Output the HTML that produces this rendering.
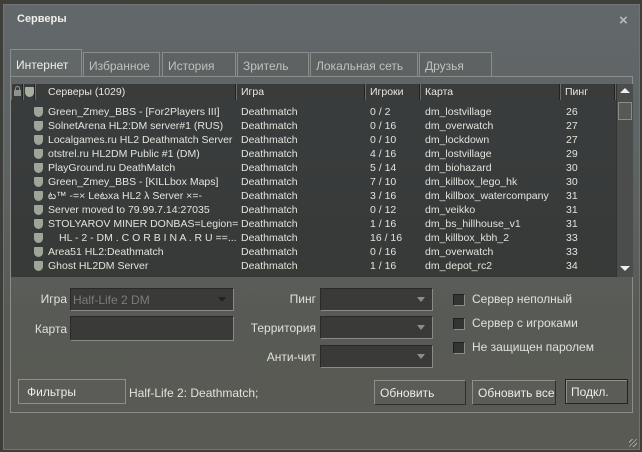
<!DOCTYPE html>
<html><head><meta charset="utf-8"><style>
*{margin:0;padding:0;box-sizing:border-box}
body{width:642px;height:452px;overflow:hidden;background:#3e3f3a;font-family:"Liberation Sans","DejaVu Sans",sans-serif;font-size:11px;color:#e2e4dc;position:relative}
.win{position:absolute;left:3px;top:4px;width:637px;height:446px;background:linear-gradient(#62686b 0%,#5e6465 30%,#585a55 70%,#5a5a54 100%);border:1px solid #707370}
.a{position:absolute;white-space:nowrap}
.tab{position:absolute;top:52px;height:25px;border:1px solid #8a8d8a;border-bottom:none;color:#bfc3bd;font-size:12px;padding:6px 0 0 5px;background:#5d6262}
.tab.on{top:49px;height:28px;color:#eef0ea;background:#626767;padding-top:8px}
.panel{position:absolute;left:10px;top:76px;width:623px;height:337px;border:1px solid #8a8d8a}
.hd{position:absolute;top:84px;height:16px;background:#3a3c3b;border-left:1px solid #6a6d6a;border-right:1px solid #222;color:#e8e8e0;padding:2px 0 0 4px;font-size:10.5px}
.list{position:absolute;left:11px;top:100px;width:605px;height:177px;background:rgba(40,42,41,.68)}
.r{position:absolute;left:0;height:14px;width:605px;font-size:10.5px}
.r span{position:absolute;top:1px;white-space:nowrap}
.r span:nth-of-type(1){width:190px;overflow:hidden}
.sh{position:absolute;left:23px;top:2px;width:9px;height:10px;background:#9ea69a;border-radius:1px 1px 5px 5px}
.sb{position:absolute;left:616px;top:84px;width:17px;height:193px;background:#4a4d4c;border-left:1px solid #333}
.combo{position:absolute;height:23px;background:#3a3b38;border:1px solid #8a8b86;border-top-color:#2a2b28;border-left-color:#2a2b28}
.combo i{position:absolute;right:7px;top:8px;width:0;height:0;border-left:4px solid transparent;border-right:4px solid transparent;border-top:5px solid #8c8e88}
.cb{position:absolute;left:453px;width:12px;height:12px;background:#333431;border:1px solid #1e1f1c;border-right-color:#8a8b86;border-bottom-color:#8a8b86}
.btn{position:absolute;height:25px;border:1px solid #8e908a;border-right-color:#2e2f2b;border-bottom-color:#2e2f2b;background:#5b5c57;font-size:12px;padding:5px 0 0 5px;color:#eceee6;overflow:hidden;white-space:nowrap}
.lbl{position:absolute;font-size:12px;color:#e0e2da;text-align:right}
</style></head><body>
<div class="win"></div>
<div class="a" style="left:17px;top:13px;font-weight:bold;font-size:11px;color:#f0f0ea">Серверы</div>
<div class="a" style="left:619px;top:12px;font-size:15px;font-weight:bold;color:#b8bcb8">×</div>

<div class="tab on" style="left:10px;width:72px">Интернет</div>
<div class="tab" style="left:83px;width:77px">Избранное</div>
<div class="tab" style="left:162px;width:74px">История</div>
<div class="tab" style="left:237px;width:72px">Зритель</div>
<div class="tab" style="left:310px;width:108px">Локальная сеть</div>
<div class="tab" style="left:419px;width:73px">Друзья</div>
<div class="panel"></div>

<div class="hd" style="left:11px;width:12px;padding:0"><div style="position:absolute;left:2px;top:6px;width:7px;height:6px;background:#8e928c"></div><div style="position:absolute;left:3px;top:2px;width:5px;height:5px;border:1px solid #8e928c;border-bottom:none;border-radius:3px 3px 0 0"></div></div>
<div class="hd" style="left:23px;width:12px;padding:0"><div class="sh" style="left:1px;top:3px;background:#a8b0a0"></div></div>
<div class="hd" style="left:35px;width:201px;padding-left:12px">Серверы (1029)</div>
<div class="hd" style="left:236px;width:129px">Игра</div>
<div class="hd" style="left:365px;width:55px">Игроки</div>
<div class="hd" style="left:420px;width:140px">Карта</div>
<div class="hd" style="left:560px;width:55px">Пинг</div>

<div class="list">
<div class="r" style="top:5px"><div class="sh"></div><span style="left:37px">Green_Zmey_BBS - [For2Players III]</span><span style="left:230px">Deathmatch</span><span style="left:359px">0 / 2</span><span style="left:414px">dm_lostvillage</span><span style="left:555px">26</span></div>
<div class="r" style="top:19px"><div class="sh"></div><span style="left:37px">SolnetArena HL2:DM server#1 (RUS)</span><span style="left:230px">Deathmatch</span><span style="left:359px">0 / 16</span><span style="left:414px">dm_overwatch</span><span style="left:555px">27</span></div>
<div class="r" style="top:33px"><div class="sh"></div><span style="left:37px">Localgames.ru HL2 Deathmatch Server</span><span style="left:230px">Deathmatch</span><span style="left:359px">0 / 10</span><span style="left:414px">dm_lockdown</span><span style="left:555px">27</span></div>
<div class="r" style="top:47px"><div class="sh"></div><span style="left:37px">otstrel.ru HL2DM Public #1 (DM)</span><span style="left:230px">Deathmatch</span><span style="left:359px">4 / 16</span><span style="left:414px">dm_lostvillage</span><span style="left:555px">29</span></div>
<div class="r" style="top:61px"><div class="sh"></div><span style="left:37px">PlayGround.ru DeathMatch</span><span style="left:230px">Deathmatch</span><span style="left:359px">5 / 14</span><span style="left:414px">dm_biohazard</span><span style="left:555px">30</span></div>
<div class="r" style="top:75px"><div class="sh"></div><span style="left:37px">Green_Zmey_BBS - [KILLbox Maps]</span><span style="left:230px">Deathmatch</span><span style="left:359px">7 / 10</span><span style="left:414px">dm_killbox_lego_hk</span><span style="left:555px">30</span></div>
<div class="r" style="top:89px"><div class="sh"></div><span style="left:37px">ట™ -=× Leటxa HL2 λ Server ×=-</span><span style="left:230px">Deathmatch</span><span style="left:359px">3 / 16</span><span style="left:414px">dm_killbox_watercompany</span><span style="left:555px">31</span></div>
<div class="r" style="top:103px"><div class="sh"></div><span style="left:37px">Server moved to 79.99.7.14:27035</span><span style="left:230px">Deathmatch</span><span style="left:359px">0 / 12</span><span style="left:414px">dm_veikko</span><span style="left:555px">31</span></div>
<div class="r" style="top:117px"><div class="sh"></div><span style="left:37px">STOLYAROV MINER DONBAS=Legion=...</span><span style="left:230px">Deathmatch</span><span style="left:359px">1 / 16</span><span style="left:414px">dm_bs_hillhouse_v1</span><span style="left:555px">31</span></div>
<div class="r" style="top:131px"><div class="sh"></div><span style="left:48px;width:180px">HL - 2 - DM . C O R B I N A . R U ==...</span><span style="left:230px">Deathmatch</span><span style="left:359px">16 / 16</span><span style="left:414px">dm_killbox_kbh_2</span><span style="left:555px">33</span></div>
<div class="r" style="top:145px"><div class="sh"></div><span style="left:37px">Area51 HL2:Deathmatch</span><span style="left:230px">Deathmatch</span><span style="left:359px">0 / 16</span><span style="left:414px">dm_overwatch</span><span style="left:555px">33</span></div>
<div class="r" style="top:159px"><div class="sh"></div><span style="left:37px">Ghost HL2DM Server</span><span style="left:230px">Deathmatch</span><span style="left:359px">1 / 16</span><span style="left:414px">dm_depot_rc2</span><span style="left:555px">34</span></div>
</div>
<div class="sb">
<div style="position:absolute;left:3px;top:4px;width:0;height:0;border-left:5px solid transparent;border-right:5px solid transparent;border-bottom:5px solid #eee"></div>
<div style="position:absolute;left:1px;top:18px;width:14px;height:18px;border:1px solid #8a8c88;background:#565956"></div>
<div style="position:absolute;left:3px;top:182px;width:0;height:0;border-left:5px solid transparent;border-right:5px solid transparent;border-top:5px solid #eee"></div>
</div>

<div class="lbl" style="left:20px;width:47px;top:292px">Игра</div>
<div class="combo" style="left:70px;top:288px;width:164px"><span class="a" style="left:2px;top:4px;font-size:12px;color:#7b7d77">Half-Life 2 DM</span><i style="border-top-color:#222"></i></div>
<div class="lbl" style="left:20px;width:47px;top:322px">Карта</div>
<div class="combo" style="left:70px;top:316px;width:164px;height:25px"></div>
<div class="lbl" style="left:240px;width:76px;top:292px">Пинг</div>
<div class="combo" style="left:320px;top:288px;width:113px"><i></i></div>
<div class="lbl" style="left:230px;width:86px;top:321px">Территория</div>
<div class="combo" style="left:320px;top:316px;width:113px"><i></i></div>
<div class="lbl" style="left:230px;width:86px;top:350px">Анти-чит</div>
<div class="combo" style="left:320px;top:345px;width:113px"><i></i></div>
<div class="cb" style="top:294px"></div><div class="lbl" style="left:472px;top:292px;text-align:left">Сервер неполный</div>
<div class="cb" style="top:318px"></div><div class="lbl" style="left:472px;top:316px;text-align:left">Сервер с игроками</div>
<div class="cb" style="top:342px"></div><div class="lbl" style="left:472px;top:340px;text-align:left">Не защищен паролем</div>

<div class="btn" style="left:18px;top:379px;width:108px;padding-left:8px;border-color:#8e908a">Фильтры</div>
<div class="a" style="left:129px;top:386px;font-size:12px">Half-Life 2: Deathmatch;</div>
<div class="btn" style="left:374px;top:380px;width:92px">Обновить</div>
<div class="btn" style="left:472px;top:380px;width:84px">Обновить все</div>
<div class="btn" style="left:565px;top:379px;width:63px;border:1px solid #222;box-shadow:inset 1px 1px 0 #8e908a">Подкл.</div>
<div class="a" style="left:629px;top:439px;width:8px;height:8px;background:repeating-linear-gradient(135deg,transparent 0 2px,#aaa 2px 3px)"></div>
</body></html>
